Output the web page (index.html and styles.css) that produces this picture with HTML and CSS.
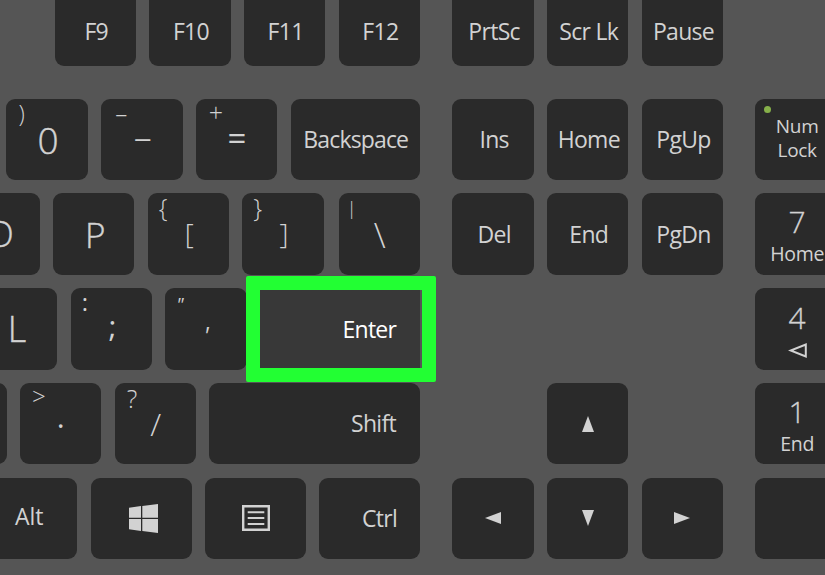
FILE: index.html
```html
<!DOCTYPE html>
<html lang="en">
<head>
<meta charset="utf-8">
<title>Keyboard – Enter key</title>
<link rel="stylesheet" href="styles.css">
</head>
<body>
<main class="board">
  <div class="row row-top">
    <div class="main">
      <div class="key fn"><span class="lbl">F9</span></div>
      <div class="key fn"><span class="lbl">F10</span></div>
      <div class="key fn"><span class="lbl">F11</span></div>
      <div class="key fn"><span class="lbl">F12</span></div>
    </div>
    <div class="nav">
      <div class="key fn"><span class="lbl">PrtSc</span></div>
      <div class="key fn"><span class="lbl">Scr Lk</span></div>
      <div class="key fn"><span class="lbl">Pause</span></div>
    </div>
  </div>

  <div class="row">
    <div class="main">
      <div class="key"><span class="sh sh-paren">)</span><span class="big big-zero">0</span></div>
      <div class="key"><span class="sh sh-minus">–</span><span class="big big-dash">–</span></div>
      <div class="key"><span class="sh sh-plus">+</span><span class="big big-eq">=</span></div>
      <div class="key w-back"><span class="lbl lbl-back">Backspace</span></div>
    </div>
    <div class="nav">
      <div class="key"><span class="lbl">Ins</span></div>
      <div class="key"><span class="lbl">Home</span></div>
      <div class="key"><span class="lbl">PgUp</span></div>
    </div>
    <div class="pad">
      <div class="key num"><i class="led"></i><span class="num-text">Num<br>Lock</span></div>
    </div>
  </div>

  <div class="row">
    <div class="main">
      <div class="key"><span class="big big-o">O</span></div>
      <div class="key"><span class="big big-p">P</span></div>
      <div class="key"><span class="sh sh-brace">{</span><span class="big big-br">[</span></div>
      <div class="key"><span class="sh sh-brace">}</span><span class="big big-br">]</span></div>
      <div class="key key-bslash"><span class="sh sh-pipe">|</span><span class="big big-bs">\</span></div>
    </div>
    <div class="nav">
      <div class="key"><span class="lbl">Del</span></div>
      <div class="key"><span class="lbl">End</span></div>
      <div class="key"><span class="lbl">PgDn</span></div>
    </div>
    <div class="pad">
      <div class="key numkey"><span class="digit">7</span><span class="sub">Home</span></div>
    </div>
  </div>

  <div class="row">
    <div class="main">
      <div class="key"><span class="big big-l">L</span></div>
      <div class="key"><span class="sh sh-colon">:</span><span class="big big-semi">;</span></div>
      <div class="key"><span class="sh sh-quote">"</span><span class="big big-apos">'</span></div>
      <div class="key enter"><span class="lbl lbl-right lbl-enter">Enter</span><i class="highlight"></i></div>
    </div>
    <div class="nav"></div>
    <div class="pad">
      <div class="key numkey">
        <span class="digit">4</span>
        <svg class="sub-icon" viewBox="0 0 19 15" width="19" height="15"><path d="M17.8 1.5V13.5L2.6 7.5Z" fill="none" stroke="#d2d2d2" stroke-width="2"/></svg>
      </div>
    </div>
  </div>

  <div class="row">
    <div class="main">
      <div class="key"></div>
      <div class="key"><span class="sh sh-gt">&gt;</span><span class="big big-dot">.</span></div>
      <div class="key"><span class="sh sh-q">?</span><span class="big big-slash">/</span></div>
      <div class="key w-shift"><span class="lbl lbl-right">Shift</span></div>
    </div>
    <div class="nav">
      <div class="key">
        <svg class="arrow" viewBox="0 0 12 16" width="12" height="16"><path d="M6 0L12 16H0Z"/></svg>
      </div>
    </div>
    <div class="pad">
      <div class="key numkey"><span class="digit">1</span><span class="sub">End</span></div>
    </div>
  </div>

  <div class="row">
    <div class="main">
      <div class="key w-mod"><span class="lbl lbl-alt">Alt</span></div>
      <div class="key w-mod">
        <svg class="icon-win" viewBox="0 0 29 29" width="29" height="29"><path d="M0 3.7L12 2.1V13.7H0ZM13.3 1.9L29 0V13.7H13.3ZM0 15H12V26.9L0 25.3ZM13.3 15H29V29L13.3 27.1Z"/></svg>
      </div>
      <div class="key w-mod">
        <svg class="icon-menu" viewBox="0 0 28 26" width="28" height="26"><path d="M1.2 1.2H26.8V24.8H1.2Z" fill="none" stroke="#d2d2d2" stroke-width="2.4"/><path d="M5.7 7.3H22.3M5.7 13H22.3M5.7 19H22.3" fill="none" stroke="#d2d2d2" stroke-width="2"/></svg>
      </div>
      <div class="key w-mod"><span class="lbl lbl-right lbl-ctrl">Ctrl</span></div>
    </div>
    <div class="nav">
      <div class="key">
        <svg class="arrow" viewBox="0 0 16 12" width="16" height="12"><path d="M0 6L16 0V12Z"/></svg>
      </div>
      <div class="key">
        <svg class="arrow" viewBox="0 0 12 16" width="12" height="16"><path d="M0 0H12L6 16Z"/></svg>
      </div>
      <div class="key">
        <svg class="arrow" viewBox="0 0 16 12" width="16" height="12"><path d="M0 0L16 6L0 12Z"/></svg>
      </div>
    </div>
    <div class="pad">
      <div class="key"></div>
    </div>
  </div>
</main>
</body>
</html>
```

FILE: styles.css
```css
html, body {
  margin: 0;
  height: 575px;
  overflow: hidden;
  background: #555555;
}

.board {
  display: flex;
  flex-direction: column;
  gap: 13.35px;
  margin-top: -15.7px;
  width: 900px;
  font-family: "Open Sans", "Noto Sans", sans-serif;
  color: #d2d2d2;
}

.row { display: flex; height: 81.4px; }
.row-top { margin-bottom: 19.6px; }

.main, .nav { display: flex; gap: 13.3px; flex: none; }
.main { width: 420px; justify-content: flex-end; }
.nav { width: 270.8px; margin-left: 32.4px; justify-content: center; }
.pad { display: flex; margin-left: 32.3px; }

.key {
  display: grid;
  place-items: center;
  flex: none;
  width: 81.4px;
  height: 81.4px;
  border-radius: 9px;
  background: #2a2a2a;
  position: relative;
}
.key > * { grid-area: 1 / 1; }

.w-back { width: 129.5px; }
.w-shift { width: 210.7px; }
.w-mod { width: 100.9px; }
.key-bslash { margin-left: 1.6px; }

.lbl { font-size: 23px; letter-spacing: -0.7px; line-height: 1; white-space: nowrap; margin-left: 2px; }
.lbl-back { letter-spacing: -0.85px; margin-left: 1px; }
.fn .lbl { margin-top: 13px; }
.lbl-right { justify-self: end; margin-left: 0; margin-right: 24px; }
.lbl-enter { margin-top: 2px; letter-spacing: -0.8px; }
.lbl-ctrl { margin-right: 23px; margin-top: 1px; }
.lbl-alt { justify-self: end; margin-right: 34px; margin-top: -4px; letter-spacing: 0; }

.sh, .big { line-height: 1; font-weight: 400; }
.sh { place-self: start; font-size: 23px; }
.big { font-size: 35px; }

.sh-paren { margin: 3px 0 0 12px; font-weight: 300; }
.sh-minus { margin: 2px 0 0 14px; font-size: 24px; font-weight: 300; }
.sh-plus { margin: 1px 0 0 13px; font-size: 25px; font-weight: 300; }
.sh-brace { margin: 2px 0 0 11px; font-size: 25px; font-weight: 300; }
.sh-pipe { margin: 6px 0 0 8px; font-size: 19px; font-weight: 300; }
.sh-colon { margin: 2px 0 0 11px; font-size: 24px; }
.sh-quote { margin: 7px 0 0 11px; font-size: 19px; font-style: italic; }
.sh-gt { margin: 1px 0 0 12px; font-size: 24px; font-weight: 300; }
.sh-q { margin: 3px 0 0 12px; font-size: 25px; font-weight: 300; }

.big-zero { margin: 0 0 0 2px; font-size: 37px; font-weight: 300; -webkit-text-stroke: 0.4px #d2d2d2; }
.big-dash { margin: 0 0 5px 2px; font-size: 36px; font-weight: 300; }
.big-eq { margin: 0 0 4px 1px; font-size: 33px; }
.big-o { justify-self: end; margin-right: 26px; font-size: 36px; font-weight: 300; -webkit-text-stroke: 0.4px #d2d2d2; }
.big-p { margin: 0 0 0 3px; font-size: 35px; font-weight: 300; -webkit-text-stroke: 0.4px #d2d2d2; }
.big-br { margin: 0 0 3px 2px; font-size: 28px; font-weight: 300; }
.big-bs { margin: 0 0 0 1px; font-size: 35px; font-weight: 300; }
.big-l { justify-self: end; margin: 0 31px 0 0; font-size: 36px; font-weight: 300; -webkit-text-stroke: 0.4px #d2d2d2; }
.big-semi { margin: 0 0 6px 2px; font-size: 30px; }
.big-apos { margin: 12px 0 0 0; font-size: 24px; font-style: italic; }
.big-dot { margin: 0 0 14px 0; font-size: 30px; }
.big-slash { margin: 0 0 0 1px; font-size: 32px; font-weight: 300; }

.enter {
  width: 160px;
  background: #383838;
  border-radius: 2px;
  color: #ffffff;
}
.highlight {
  position: absolute;
  top: -12px;
  bottom: -12px;
  left: -14.5px;
  right: -16px;
  border: 14.5px solid #22ff33;
  border-radius: 2px;
}

.arrow { fill: #d2d2d2; }
.icon-win { fill: #d2d2d2; margin-left: 4px; }
.icon-menu { margin-left: 2px; }

.led {
  place-self: start;
  width: 7px;
  height: 7px;
  margin: 7px 0 0 9px;
  border-radius: 50%;
  background: #86b04a;
}
.num-text {
  font-size: 19px;
  line-height: 24px;
  text-align: center;
  margin: -2px 0 0 2px;
  letter-spacing: -0.3px;
}

.numkey {
  grid-template-rows: auto auto;
  align-content: center;
  row-gap: 0;
}
.numkey > * { grid-area: auto; }
.digit { font-size: 30px; line-height: 36px; font-weight: 300; margin: 3px 0 0 2px; -webkit-text-stroke: 0.3px #d2d2d2; }
.sub { font-size: 19.5px; line-height: 26px; letter-spacing: -0.3px; margin: 1px 0 0 2px; }
.sub-icon { margin: 7px 0 2px 2px; }
```
